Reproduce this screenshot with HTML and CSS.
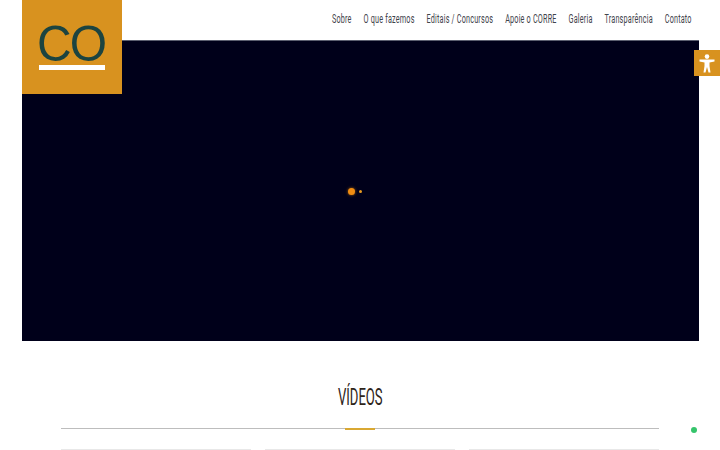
FILE: index.html
```html
<!DOCTYPE html>
<html lang="pt">
<head>
<meta charset="utf-8">
<title>CORRE</title>
<link rel="stylesheet" href="styles.css">
</head>
<body>
<div class="page">
  <header class="topbar">
    <nav class="nav">
      <a href="#">Sobre</a>
      <a href="#">O que fazemos</a>
      <a href="#">Editais / Concursos</a>
      <a href="#">Apoie o CORRE</a>
      <a href="#">Galeria</a>
      <a href="#">Transparência</a>
      <a href="#">Contato</a>
    </nav>
  </header>
  <a class="logo" href="#"><span class="logo-text">CO</span><span class="logo-bar"></span></a>
  <main>
    <section class="hero">
      <div class="loader"><span class="dot-big"></span><span class="dot-small"></span></div>
    </section>
    <section class="videos">
      <h2 class="videos-title"><span class="videos-title-text">VÍDEOS</span></h2>
      <div class="divider"><span class="divider-accent"></span></div>
      <div class="cards">
        <div class="card"></div>
        <div class="card"></div>
        <div class="card"></div>
      </div>
    </section>
  </main>
  <button class="a11y" aria-label="Acessibilidade">
    <svg width="16" height="19" viewBox="0 0 16 19"><circle cx="8" cy="2.600" r="2.300" fill="#fff"/><path d="M.5 5.600h15v1.800L10.500 8.400v3.600l1 6.500H9.500L8 13 6.500 18.500H4.500l1-6.500V8.400L.5 7.400z" fill="#fff"/></svg>
  </button>
  <span class="status-dot"></span>
</div>
</body>
</html>
```
FILE: styles.css
```css
html, body { margin: 0; padding: 0; background: #fff; }
.page {
  position: relative;
  width: 720px;
  height: 450px;
  overflow: hidden;
  padding: 0 21.5px;
  box-sizing: border-box;
  font-family: "Roboto", "Liberation Sans", sans-serif;
}
.topbar { height: 40px; display: flex; justify-content: flex-end; align-items: center; }
.nav {
  display: flex;
  gap: 19.8px;
  margin-right: 6.5px;
  margin-top: -2px;
  transform: scaleX(0.605);
  transform-origin: right center;
  flex: none;
}
.nav a { color: #3f444c; font-size: 12px; font-weight: 400; text-decoration: none; letter-spacing: 0.3px; white-space: nowrap; }
.logo {
  position: absolute;
  left: 22px;
  top: 0;
  width: 100px;
  height: 94px;
  background: #d8921f;
  text-decoration: none;
}
.logo-text {
  position: absolute;
  left: 15px;
  top: 16px;
  font-family: "Liberation Sans", sans-serif;
  font-size: 50px;
  line-height: 56px;
  letter-spacing: -2px;
  color: #1c4440;
  transform: scaleX(0.96);
  transform-origin: left center;
}
.logo-bar { position: absolute; left: 17px; top: 65px; width: 66px; height: 5px; background: #fff; }
.hero {
  height: 301px;
  background: #00001a;
  border-top: 1px solid #5c5f70;
  box-sizing: border-box;
  display: flex;
  align-items: center;
  justify-content: center;
}
.loader { display: flex; align-items: center; gap: 4px; margin-right: 11px; }
.dot-big { width: 7px; height: 7px; border-radius: 50%; background: #f08c12; box-shadow: 0 0 3px #a8620e; }
.dot-small { width: 3px; height: 3px; border-radius: 50%; background: #e89a20; }
.videos { padding: 0 39.5px; text-align: center; }
.videos-title {
  margin: 44px 0 0;
  height: 43px;
  font-size: 23px;
  line-height: 26px;
  font-weight: 400;
  color: #2e2419;
}
.videos-title-text { display: inline-block; transform: scaleX(0.57); }
.divider { height: 1px; background: #bdbdbd; display: flex; justify-content: center; align-items: center; }
.divider-accent { width: 30px; height: 2px; background: #d9a832; }
.cards { display: flex; gap: 14px; margin-top: 20px; }
.card { flex: 1; height: 60px; border-top: 1px solid #e8e8e8; }
.a11y {
  position: absolute;
  right: 0;
  top: 50px;
  width: 26px;
  height: 26px;
  padding: 0;
  border: 0;
  background: #d8921f;
  display: flex;
  align-items: center;
  justify-content: center;
}
.status-dot {
  position: absolute;
  left: 691px;
  top: 427px;
  width: 6px;
  height: 6px;
  border-radius: 50%;
  background: #35c46b;
}
```
